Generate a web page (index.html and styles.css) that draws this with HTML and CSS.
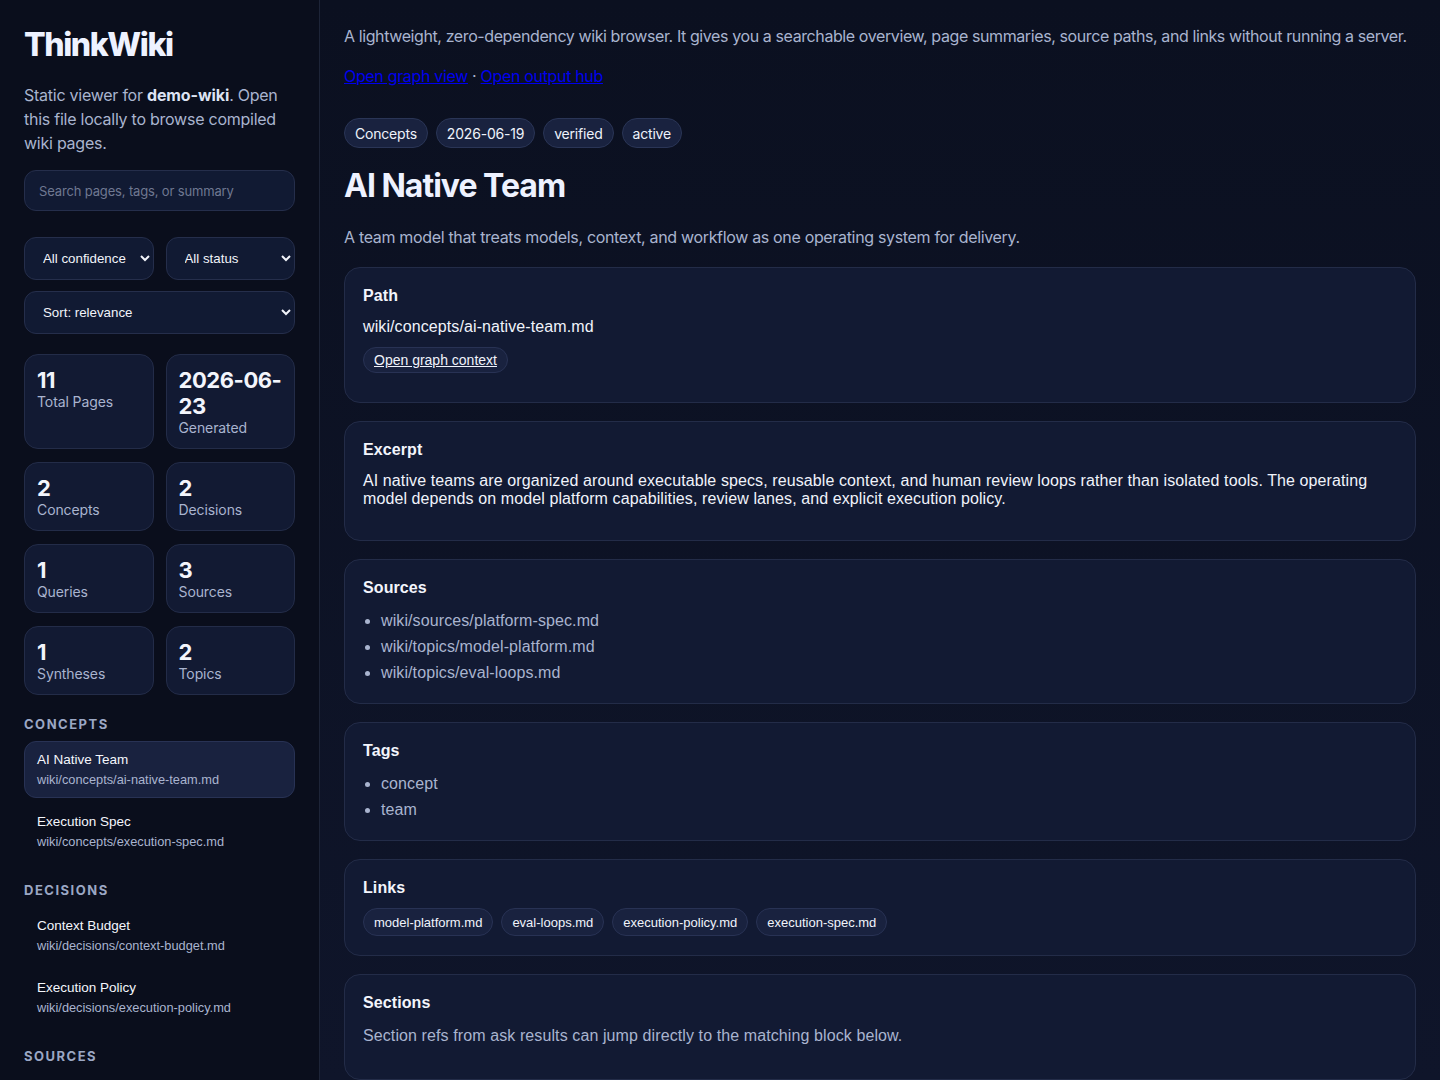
FILE: index.html
```html
<!DOCTYPE html>
<html lang="en">
<head>
    <meta charset="UTF-8">
    <title>ThinkWiki</title>
    <link rel="stylesheet" href="styles.css">
</head>
<body>
    <div class="layout">
        <aside class="sidebar">
            <h1>ThinkWiki</h1>
            <p class="intro">Static viewer for <strong>demo-wiki</strong>. Open this file locally to browse compiled wiki pages.</p>

            <input type="text" class="search" placeholder="Search pages, tags, or summary">

            <div class="filters">
                <select>
                    <option>All confidence</option>
                </select>
                <select>
                    <option>All status</option>
                </select>
                <select class="wide">
                    <option>Sort: relevance</option>
                </select>
            </div>

            <div class="stats">
                <div class="stat"><b>11</b><span>Total Pages</span></div>
                <div class="stat"><b>2026-06-<wbr>23</b><span>Generated</span></div>
                <div class="stat"><b>2</b><span>Concepts</span></div>
                <div class="stat"><b>2</b><span>Decisions</span></div>
                <div class="stat"><b>1</b><span>Queries</span></div>
                <div class="stat"><b>3</b><span>Sources</span></div>
                <div class="stat"><b>1</b><span>Syntheses</span></div>
                <div class="stat"><b>2</b><span>Topics</span></div>
            </div>

            <h2 class="group first">Concepts</h2>
            <button class="page-item active">
                <span class="name">AI Native Team</span>
                <span class="file">wiki/concepts/ai-native-team.md</span>
            </button>
            <button class="page-item">
                <span class="name">Execution Spec</span>
                <span class="file">wiki/concepts/execution-spec.md</span>
            </button>

            <h2 class="group">Decisions</h2>
            <button class="page-item">
                <span class="name">Context Budget</span>
                <span class="file">wiki/decisions/context-budget.md</span>
            </button>
            <button class="page-item">
                <span class="name">Execution Policy</span>
                <span class="file">wiki/decisions/execution-policy.md</span>
            </button>

            <h2 class="group">Sources</h2>
        </aside>

        <main class="content">
            <p class="lead">A lightweight, zero-dependency wiki browser. It gives you a searchable overview, page summaries, source paths, and links without running a server.</p>
            <p class="hub-links"><a href="#">Open graph view</a> · <a href="#">Open output hub</a></p>

            <div class="pills">
                <span class="pill">Concepts</span>
                <span class="pill">2026-06-19</span>
                <span class="pill">verified</span>
                <span class="pill">active</span>
            </div>

            <h2 class="page-title">AI Native Team</h2>
            <p class="summary">A team model that treats models, context, and workflow as one operating system for delivery.</p>

            <section class="panel">
                <h3>Path</h3>
                <p class="path">wiki/concepts/ai-native-team.md</p>
                <div class="chips graph">
                    <a href="#" class="chip">Open graph context</a>
                </div>
            </section>

            <section class="panel">
                <h3>Excerpt</h3>
                <p>AI native teams are organized around executable specs, reusable context, and human review loops rather than isolated tools. The operating model depends on model platform capabilities, review lanes, and explicit execution policy.</p>
            </section>

            <section class="panel">
                <h3>Sources</h3>
                <ul>
                    <li>wiki/sources/platform-spec.md</li>
                    <li>wiki/topics/model-platform.md</li>
                    <li>wiki/topics/eval-loops.md</li>
                </ul>
            </section>

            <section class="panel">
                <h3>Tags</h3>
                <ul>
                    <li>concept</li>
                    <li>team</li>
                </ul>
            </section>

            <section class="panel">
                <h3>Links</h3>
                <div class="chips">
                    <button class="chip">model-platform.md</button>
                    <button class="chip">eval-loops.md</button>
                    <button class="chip">execution-policy.md</button>
                    <button class="chip">execution-spec.md</button>
                </div>
            </section>

            <section class="panel">
                <h3>Sections</h3>
                <p class="muted">Section refs from ask results can jump directly to the matching block below.</p>
            </section>
        </main>
    </div>
</body>
</html>
```

FILE: styles.css
```css
* {
    box-sizing: border-box;
}
body {
    margin: 0;
    font-family: Inter, 'Noto Sans', sans-serif;
    letter-spacing: -0.33px;
    background: #0b1020;
    color: #e8ecf8;
    height: 1080px;
    overflow: hidden;
}
.layout {
    display: grid;
    grid-template-columns: 320px 1fr;
    height: 100vh;
}
.sidebar {
    background: #0a0e1c;
    border-right: 1px solid #1d2437;
    padding: 24px 24px;
    overflow: hidden;
}
.sidebar h1 {
    margin: 1px 0 0;
    font-size: 32px;
    line-height: 40px;
    font-weight: 800;
    letter-spacing: -1.4px;
    color: #eef2ff;
}
.intro {
    margin: 18px 0 15px;
    font-size: 16px;
    line-height: 24px;
    letter-spacing: -0.25px;
    color: #a9b4cf;
}
.intro strong {
    color: #dde3f3;
    letter-spacing: -0.1px;
}
.search {
    width: 100%;
    height: 41px;
    padding: 0 14px;
    border: 1px solid #252e4b;
    border-radius: 12px;
    background: #111a33;
    color: #e8ecf8;
    font-family: Inter, sans-serif;
    font-size: 13px;
    letter-spacing: -0.15px;
}
.search::placeholder {
    color: #6f7891;
}
.filters {
    display: grid;
    grid-template-columns: 1fr 1fr;
    gap: 11px 12px;
    margin-top: 26px;
}
.filters select {
    height: 43px;
    padding: 0 10px 0 14px;
    border: 1px solid #252e4b;
    border-radius: 12px;
    background: #111a33;
    color: #f2f4fa;
    font-family: 'Liberation Sans', Arial, sans-serif;
    font-size: 13.3px;
}
.filters .wide {
    grid-column: 1 / 3;
}
.stats {
    display: grid;
    grid-template-columns: 1fr 1fr;
    gap: 13px 12px;
    margin-top: 20px;
    letter-spacing: -0.1px;
}
.stat {
    background: #121a33;
    border: 1px solid #232c48;
    border-radius: 14px;
    padding: 12px 12px 11px;
    display: flex;
    flex-direction: column;
    min-height: 69px;
}
.stat b {
    font-size: 22px;
    line-height: 26px;
    font-weight: 700;
    letter-spacing: -0.45px;
    color: #f3f5fc;
}
.stat span {
    font-size: 14px;
    line-height: 18px;
    color: #a9b4cf;
}
.group {
    margin: 22px 0 9px;
    font-size: 13px;
    line-height: 16px;
    font-weight: 700;
    letter-spacing: 1.5px;
    text-transform: uppercase;
    color: #9ba7c4;
}
.group.first {
    margin-top: 21px;
}
.page-item {
    display: block;
    width: 100%;
    text-align: left;
    background: transparent;
    border: 1px solid transparent;
    border-radius: 12px;
    padding: 9px 12px 9px;
    margin-bottom: 5px;
    font-family: 'Liberation Sans', Arial, sans-serif;
    cursor: pointer;
}
.page-item.active {
    background: #19223f;
    border-color: #283254;
}
.page-item .name {
    display: block;
    font-size: 13.5px;
    line-height: 18px;
    color: #f4f6fc;
}
.page-item .file {
    display: block;
    font-size: 12.8px;
    line-height: 17px;
    margin-top: 2px;
    color: #a9b4cf;
}
.content {
    padding: 24px 24px 0;
    background: linear-gradient(180deg, #0b1020 0%, #0f152a 100%);
    overflow: hidden;
}
.lead {
    margin: 0;
    font-size: 16px;
    line-height: 24px;
    letter-spacing: -0.4px;
    color: #a9b4cf;
}
.hub-links {
    margin: 16px 0 0;
    font-size: 16px;
    line-height: 24px;
    color: #a9b4cf;
}
.hub-links a {
    color: #0000ee;
}
.pills {
    display: flex;
    gap: 8px;
    margin-top: 30px;
}
.pill {
    height: 30px;
    padding: 0 10px;
    display: flex;
    align-items: center;
    border: 1px solid #2a3556;
    border-radius: 15px;
    background: #19223f;
    font-size: 14px;
    letter-spacing: -0.2px;
    color: #eef2fb;
}
.page-title {
    margin: 18px 0 0;
    font-size: 32px;
    line-height: 40px;
    font-weight: 700;
    letter-spacing: -1px;
    color: #eef2ff;
}
.summary {
    margin: 19px 0 18px;
    font-size: 16px;
    line-height: 24px;
    color: #a9b4cf;
}
.panel {
    background: #121a33;
    border: 1px solid #232c48;
    border-radius: 16px;
    padding: 18px 18px 16px;
    margin-bottom: 18px;
    font-family: 'Liberation Sans', Arial, sans-serif;
    letter-spacing: 0.1px;
}
.panel h3 {
    margin: 0 0 10px;
    font-size: 16px;
    line-height: 20px;
    font-weight: 700;
    color: #f3f5fc;
}
.panel p {
    margin: 12px 0 16px;
    font-size: 16px;
    line-height: 18px;
    color: #f0f3fb;
}
.panel .path {
    margin-bottom: 11px;
}
.panel .muted {
    color: #a9b4cf;
    line-height: 22px;
}
.panel ul {
    margin: 0 0 1px;
    padding-left: 18px;
    color: #a9b4cf;
}
.panel li {
    font-size: 16px;
    line-height: 26px;
}
.chips {
    display: flex;
    flex-wrap: wrap;
    gap: 8px;
    margin-bottom: 3px;
}
.chips.graph {
    margin-bottom: 13px;
}
.chip {
    height: 28px;
    padding: 0 10px;
    display: inline-flex;
    align-items: center;
    border: 1px solid #283254;
    border-radius: 14px;
    background: #19223f;
    color: #f0f3fb;
    font-family: 'Liberation Sans', Arial, sans-serif;
    font-size: 13px;
    cursor: pointer;
}
a.chip {
    height: 26px;
    font-size: 14px;
    letter-spacing: 0;
    color: #f0f3fb;
}
```
